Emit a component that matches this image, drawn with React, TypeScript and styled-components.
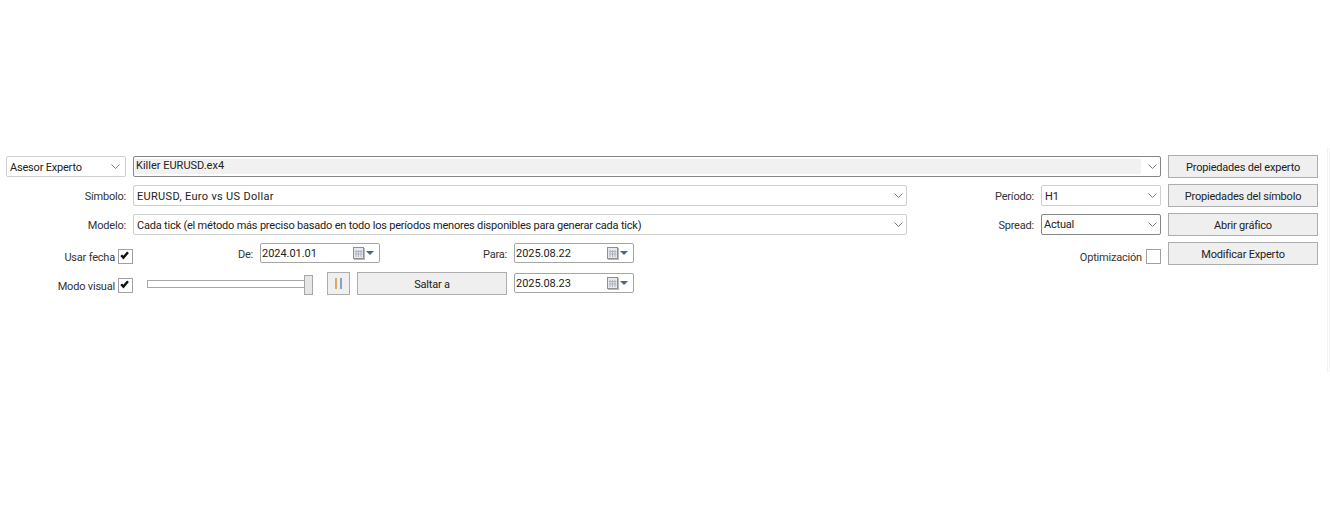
import styled, { createGlobalStyle } from 'styled-components'

const GlobalStyle = createGlobalStyle`
  html, body {
    margin: 0;
    padding: 0;
    background: #fff;
  }
  body {
    font-family: Roboto, 'Noto Sans', sans-serif;
    font-size: 11px;
    letter-spacing: -0.2px;
    color: #222;
  }
`

const Chevron = () => (
  <ChevronSvg width='9' height='5' viewBox='0 0 9 5'>
    <path d='M0.5 0.5 L4.5 4.5 L8.5 0.5' fill='none' stroke='#7a7a7a' strokeWidth='1' />
  </ChevronSvg>
)

const CalendarIcon = () => (
  <svg width='21' height='13' viewBox='0 0 21 13'>
    <rect x='1' y='1' width='11' height='12' fill='#b9b9b9' />
    <rect x='0.5' y='0.5' width='10' height='11' fill='#e6e9ef' stroke='#8f8f8f' />
    <path d='M3 3V10M5.5 3V10M8 3V10M2 4.5H9.5M2 7H9.5' stroke='#aeb4bd' strokeWidth='1' />
    <path d='M13 4 H21 L17 8 Z' fill='#4d6488' />
  </svg>
)

const CheckMark = () => (
  <svg width='13' height='13' viewBox='0 0 13 13'>
    <path d='M2.2 5.2 L4.4 7.6 L9 2.2' fill='none' stroke='#111' strokeWidth='2.4' />
  </svg>
)

interface ComboProps {
  value: string
  w: number
  active?: boolean
  padRight?: number
  track?: number
}

const Combo = ({ value, w, active, padRight = 3, track = -0.2 }: ComboProps) => (
  <ComboBox $w={w} $active={active} $padRight={padRight}>
    <ComboText $active={active} $track={track}>
      {value}
    </ComboText>
    <Chevron />
  </ComboBox>
)

const DateField = ({ value }: { value: string }) => (
  <DateBox>
    <span>{value}</span>
    <CalendarIcon />
  </DateBox>
)

export default function App() {
  return (
    <>
      <GlobalStyle />
      <Page>
        <TopRow>
          <Combo value='Asesor Experto' w={120} padRight={5} />
          <ExpertCombo>
            <ExpertFill>Killer EURUSD.ex4</ExpertFill>
            <Chevron />
          </ExpertCombo>
          <ActionButton>Propiedades del experto</ActionButton>
        </TopRow>

        <Row>
          <FieldLabel $w={127}>Símbolo:</FieldLabel>
          <Combo value='EURUSD, Euro vs US Dollar' w={774} track={0.32} />
          <FieldLabel $w={134}>Período:</FieldLabel>
          <Combo value='H1' w={120} />
          <ActionButton>Propiedades del símbolo</ActionButton>
        </Row>

        <Row>
          <FieldLabel $w={127}>Modelo:</FieldLabel>
          <Combo
            value='Cada tick (el método más preciso basado en todo los períodos menores disponibles para generar cada tick)'
            w={774}
          />
          <FieldLabel $w={134}>Spread:</FieldLabel>
          <Combo value='Actual' w={120} active />
          <ActionButton>Abrir gráfico</ActionButton>
        </Row>

        <Row>
          <CheckLabel $top={6}>
            <LabelText>Usar fecha</LabelText>
            <CheckBox>
              <CheckMark />
            </CheckBox>
          </CheckLabel>
          <FieldLabel $w={127}>De:</FieldLabel>
          <DateField value='2024.01.01' />
          <FieldLabel $w={134}>Para:</FieldLabel>
          <DateField value='2025.08.22' />
          <OptimizeLabel>
            <LabelText>Optimización</LabelText>
            <CheckBox />
          </OptimizeLabel>
          <ActionButton>Modificar Experto</ActionButton>
        </Row>

        <VisualRow>
          <CheckLabel $top={5}>
            <LabelText>Modo visual</LabelText>
            <CheckBox>
              <CheckMark />
            </CheckBox>
          </CheckLabel>
          <Slider>
            <SliderTrack />
            <SliderThumb />
          </Slider>
          <PauseButton>
            <PauseBars />
          </PauseButton>
          <JumpButton>Saltar a</JumpButton>
          <DateField value='2025.08.23' />
        </VisualRow>
      </Page>
      <PanelEdge />
    </>
  )
}

const Page = styled.div`
  width: 1330px;
  height: 514px;
  box-sizing: border-box;
  padding: 155px 0 0 6px;
  overflow: hidden;
`

// faint edge of the neighbouring panel, over the page on the right
const PanelEdge = styled.div`
  position: absolute;
  left: 1327px;
  top: 148px;
  box-sizing: border-box;
  width: 3px;
  height: 224px;
  border: solid #f3f3f3;
  border-width: 0 1px;
`

const Row = styled.div`
  display: flex;
  align-items: center;
  width: 1312px;
  height: 23px;
  margin-top: 6px;
`

const TopRow = styled(Row)`
  margin-top: 0;
`

const VisualRow = styled(Row)`
  align-items: flex-start;
  margin-top: 7px;
`

const ComboBox = styled.div<{ $w: number; $active?: boolean; $padRight: number }>`
  flex: none;
  display: flex;
  align-items: center;
  justify-content: space-between;
  box-sizing: border-box;
  width: ${(p) => p.$w}px;
  height: 21px;
  padding: 0 ${(p) => p.$padRight}px 0 ${(p) => (p.$active ? 2 : 3)}px;
  background: #fff;
  border: 1px solid ${(p) => (p.$active ? '#868686' : '#cfcfcf')};
  border-radius: 2px;
  white-space: nowrap;
`

const ComboText = styled.span<{ $active?: boolean; $track: number }>`
  padding-top: ${(p) => (p.$active ? 0 : 2)}px;
  letter-spacing: ${(p) => p.$track}px;
`

const ExpertCombo = styled.div`
  flex: none;
  display: flex;
  align-items: center;
  justify-content: space-between;
  box-sizing: border-box;
  width: 1028px;
  height: 21px;
  margin-left: 7px;
  padding: 2px 3px 2px 1px;
  border: 1px solid #868686;
  border-radius: 2px;
`

const ExpertFill = styled.div`
  flex: 0 0 1006px;
  height: 100%;
  padding-left: 1px;
  box-sizing: border-box;
  background: #f1f1f1;
  line-height: 14px;
  letter-spacing: 0;
`

const ChevronSvg = styled.svg`
  flex: none;
`

const FieldLabel = styled.div<{ $w: number }>`
  flex: none;
  width: ${(p) => p.$w}px;
  padding: 1px 7px 0 0;
  box-sizing: border-box;
  text-align: right;
  color: #333;
`

const ActionButton = styled.div`
  flex: none;
  box-sizing: border-box;
  width: 150px;
  height: 23px;
  line-height: 23px;
  margin-left: 7px;
  text-align: center;
  background: #efefef;
  border: 1px solid #adadad;
`

const LabelText = styled.span`
  color: #333;
  padding-top: 3px;
`

const CheckLabel = styled.div<{ $top: number }>`
  flex: none;
  align-self: flex-start;
  display: flex;
  align-items: center;
  justify-content: flex-end;
  gap: 3px;
  box-sizing: border-box;
  width: 127px;
  margin-top: ${(p) => p.$top}px;
`

const CheckBox = styled.div`
  flex: none;
  box-sizing: border-box;
  width: 15px;
  height: 15px;
  background: #fff;
  border: 1px solid #a0a0a0;

  svg {
    display: block;
  }
`

const DateBox = styled.div`
  flex: none;
  align-self: flex-start;
  display: flex;
  align-items: center;
  justify-content: space-between;
  box-sizing: border-box;
  width: 120px;
  height: 20px;
  margin-top: 1px;
  padding: 0 5px 0 1px;
  background: #fff;
  border: 1px solid #a6a6a6;
  border-radius: 2px;
  letter-spacing: -0.05px;
`

const OptimizeLabel = styled.div`
  flex: none;
  align-self: flex-start;
  display: flex;
  align-items: center;
  gap: 4px;
  margin: 6px 0 0 auto;
`

const Slider = styled.div`
  position: relative;
  flex: none;
  width: 166px;
  height: 23px;
  margin-left: 14px;
`

const SliderTrack = styled.div`
  box-sizing: border-box;
  width: 158px;
  height: 8px;
  margin-top: 8px;
  background: #fff;
  border: 1px solid #a6a6a6;
`

const SliderThumb = styled.div`
  position: absolute;
  left: 157px;
  top: 3px;
  box-sizing: border-box;
  width: 9px;
  height: 20px;
  background: #e6e6e6;
  border: 1px solid #a6a6a6;
`

const PauseButton = styled.div`
  flex: none;
  display: flex;
  align-items: center;
  justify-content: center;
  box-sizing: border-box;
  width: 23px;
  height: 23px;
  margin-left: 14px;
  background: #efefef;
  border: 1px solid #adadad;
`

const PauseBars = styled.div`
  width: 7px;
  height: 11px;
  box-sizing: border-box;
  border-style: solid;
  border-width: 0 2px;
  border-left-color: #e2a565;
  border-right-color: #7aa6d2;
`

const JumpButton = styled.div`
  flex: none;
  box-sizing: border-box;
  width: 150px;
  height: 23px;
  line-height: 23px;
  margin: 0 7px;
  text-align: center;
  background: #efefef;
  border: 1px solid #adadad;
`
